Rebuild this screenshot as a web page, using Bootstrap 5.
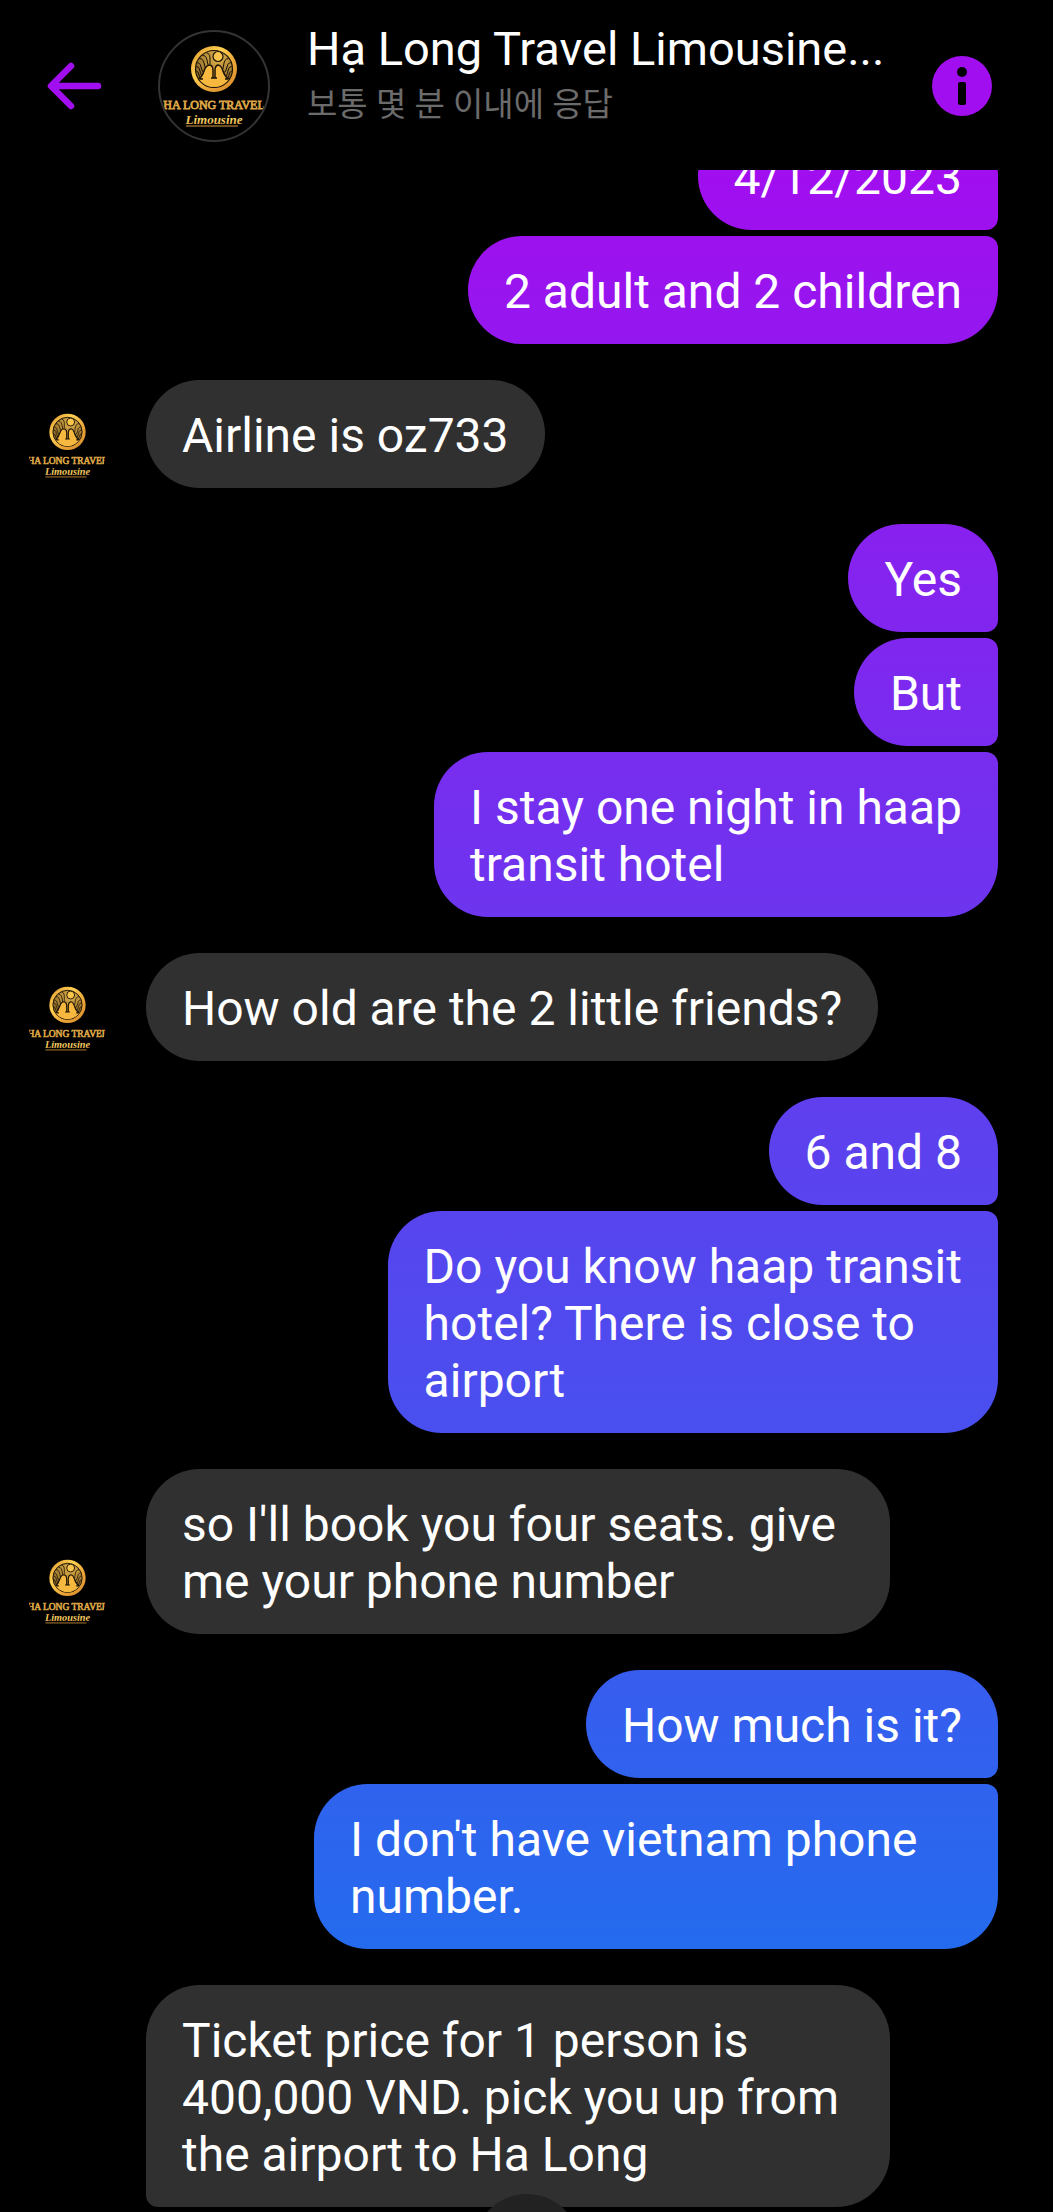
<!DOCTYPE html>
<html lang="ko">
<head>
<meta charset="utf-8">
<meta name="viewport" content="width=device-width, initial-scale=1">
<title>Hạ Long Travel Limousine</title>
<link href="https://cdn.jsdelivr.net/npm/bootstrap@5.3.0/dist/css/bootstrap.min.css" rel="stylesheet">
<style>
  body { font-family: Roboto, "Noto Sans CJK KR", sans-serif; background: #000; color: #fff; }
  .chat-app { height: 100vh; }
  .chat-head { height: 170px; padding: 2px 61px 0 44px; }
  .icon-btn { background: none; border: 0; padding: 0; line-height: 0; color: #a10eef; }
  .head-avatar { width: 112px; height: 112px; margin-left: 54px; border: 2px solid #333; }
  .head-text { padding: 0 0 20px 37px; min-width: 0; }
  .head-title { font-size: 47px; line-height: 57px; font-weight: 400; }
  .head-sub { font-size: 33px; line-height: 56px; color: #6b6b6b; }
  .thread { padding: 0 55px 5px 28px; gap: 36px; min-height: 0; }
  .turn { gap: 6px; }
  .turn-in { gap: 39px; }
  .small-avatar { width: 79px; height: 79px; }
  .bubble { font-size: 48px; line-height: 57px; padding: 27px 36px 24px; border-radius: 54px; max-width: 744px; }
  .bubble-in { background: #303030; }
  .bubble-open { border-bottom-left-radius: 12px; }
  .bubble-out { background: linear-gradient(#a10eef 170px, #246bee 1950px) fixed; max-width: 684px; }
  .turn-out .bubble-out:not(:first-child) { border-top-right-radius: 12px; }
  .turn-out .bubble-out:not(:last-child) { border-bottom-right-radius: 12px; }
  .jump-btn { width: 106px; height: 106px; bottom: -88px; background: #222; border: 0; }
</style>
<script src="https://cdn.jsdelivr.net/npm/bootstrap@5.3.0/dist/js/bootstrap.bundle.min.js" defer></script>
</head>
<body>
<svg width="0" height="0" class="position-absolute" aria-hidden="true">
  <defs>
    <linearGradient id="gold" x1="0" y1="0" x2="1" y2="1">
      <stop offset="0" stop-color="#d88f28"/><stop offset=".35" stop-color="#ffd052"/>
      <stop offset=".65" stop-color="#e9a437"/><stop offset="1" stop-color="#d9892b"/>
    </linearGradient>
    <linearGradient id="goldText" x1="0" y1="0" x2="0" y2="1">
      <stop offset="0" stop-color="#c98a35"/><stop offset=".5" stop-color="#ffd968"/><stop offset="1" stop-color="#c47f2c"/>
    </linearGradient>
    <radialGradient id="sky" cx=".6" cy=".2" r=".7">
      <stop offset="0" stop-color="#e0b048"/><stop offset="1" stop-color="#8a682a"/>
    </radialGradient>
    <clipPath id="disc"><circle r="18"/></clipPath>
    <g id="logo">
      <circle r="23" fill="url(#gold)"/>
      <circle r="18.500" fill="url(#sky)" stroke="#1a1206" stroke-width="1.200"/>
      <g clip-path="url(#disc)">
        <g fill="none" stroke="#1a1206" stroke-width="1">
          <path d="M-20-6q6-2 7 4t4 6M-20-2q5-2 6 4t4 5M-20 2q4-1 5 4t4 4M-18-10q7-2 8 4t3 7M-15-14q7-1 8 5t2 7M-11-17q7 0 7 6t0 6"/>
          <path d="M20-6q-6-2-7 4t-4 6M20-2q-5-2-6 4t-4 5M20 2q-4-1-5 4t-4 4M18-10q-7-2-8 4t-1 6"/>
        </g>
        <path d="M-20 10H-15Q-12 8-10 2Q-8-4-4-4Q0-3 0 0Q0-3 4-4Q7-4 9 2Q11 8 15 10H20V20H-20Z" fill="#f6b83f"/>
        <path d="M-17 10h6M17 10h-6M-15 10Q-12 8-10 2Q-8-4-4-4Q-1-3-1 1V9M1 9V1Q1-3 4-4Q7-4 9 2Q11 8 15 10M-3 9H3" fill="none" stroke="#1a1206" stroke-width="1.500"/>
      </g>
      <circle cx="4" cy="-12.500" r="5" fill="#f9c64b" stroke="#1a1206" stroke-width="1.200"/>
      <text y="40" text-anchor="middle" font-family="Liberation Serif, serif" font-size="12" fill="url(#goldText)" stroke="#dca344" stroke-width=".8">HA LONG TRAVEL</text>
      <text y="55" text-anchor="middle" font-family="Liberation Serif, serif" font-size="13" font-style="italic" font-weight="700" fill="url(#goldText)">Limousine</text>
      <path d="M-28 57H24" stroke="#d99b3c" stroke-width="1"/>
    </g>
  </defs>
</svg>

<div class="chat-app d-flex flex-column position-relative overflow-hidden">
  <header class="chat-head d-flex align-items-center flex-shrink-0">
    <button class="icon-btn" type="button" aria-label="Back">
      <svg width="60" height="54" viewBox="0 0 60 54" fill="none" stroke="currentColor" stroke-width="6.500" stroke-linecap="round" stroke-linejoin="round"><path d="M27 7L7 27l20 20M8 27h46"/></svg>
    </button>
    <svg class="head-avatar rounded-circle flex-shrink-0" viewBox="-54 -37 108 108"><use href="#logo"/></svg>
    <div class="head-text flex-grow-1 text-nowrap">
      <h1 class="head-title mb-0">Hạ Long Travel Limousine...</h1>
      <div class="head-sub">보통 몇 분 이내에 응답</div>
    </div>
    <button class="icon-btn" type="button" aria-label="Info">
      <svg width="60" height="60" viewBox="0 0 60 60"><circle cx="30" cy="30" r="30" fill="currentColor"/><circle cx="30" cy="16" r="5" fill="#000"/><rect x="26" y="26" width="8" height="23" rx="2" fill="#000"/></svg>
    </button>
  </header>

  <main class="thread d-flex flex-column justify-content-end flex-grow-1 overflow-hidden">
    <div class="turn turn-out d-flex flex-column align-items-end flex-shrink-0">
      <div class="bubble bubble-out">4/12/2023</div>
      <div class="bubble bubble-out">2 adult and 2 children</div>
    </div>
    <div class="turn-in d-flex align-items-end flex-shrink-0">
      <svg class="small-avatar rounded-circle flex-shrink-0" viewBox="-50 -29 100 100"><use href="#logo"/></svg>
      <div class="bubble bubble-in">Airline is oz733</div>
    </div>
    <div class="turn turn-out d-flex flex-column align-items-end flex-shrink-0">
      <div class="bubble bubble-out">Yes</div>
      <div class="bubble bubble-out">But</div>
      <div class="bubble bubble-out">I stay one night in haap<br>transit hotel</div>
    </div>
    <div class="turn-in d-flex align-items-end flex-shrink-0">
      <svg class="small-avatar rounded-circle flex-shrink-0" viewBox="-50 -29 100 100"><use href="#logo"/></svg>
      <div class="bubble bubble-in">How old are the 2 little friends?</div>
    </div>
    <div class="turn turn-out d-flex flex-column align-items-end flex-shrink-0">
      <div class="bubble bubble-out">6 and 8</div>
      <div class="bubble bubble-out">Do you know haap transit<br>hotel? There is close to<br>airport</div>
    </div>
    <div class="turn-in d-flex align-items-end flex-shrink-0">
      <svg class="small-avatar rounded-circle flex-shrink-0" viewBox="-50 -29 100 100"><use href="#logo"/></svg>
      <div class="bubble bubble-in">so I'll book you four seats. give me your phone number</div>
    </div>
    <div class="turn turn-out d-flex flex-column align-items-end flex-shrink-0">
      <div class="bubble bubble-out">How much is it?</div>
      <div class="bubble bubble-out">I don't have vietnam phone number.</div>
    </div>
    <div class="turn-in d-flex align-items-end flex-shrink-0">
      <div class="small-avatar flex-shrink-0"></div>
      <div class="bubble bubble-in bubble-open">Ticket price for 1 person is 400,000 VND. pick you up from the airport to Ha Long</div>
    </div>
  </main>
  <button class="jump-btn rounded-circle position-absolute start-50 translate-middle-x" type="button" aria-label="Scroll to latest"></button>
</div>
</body>
</html>
